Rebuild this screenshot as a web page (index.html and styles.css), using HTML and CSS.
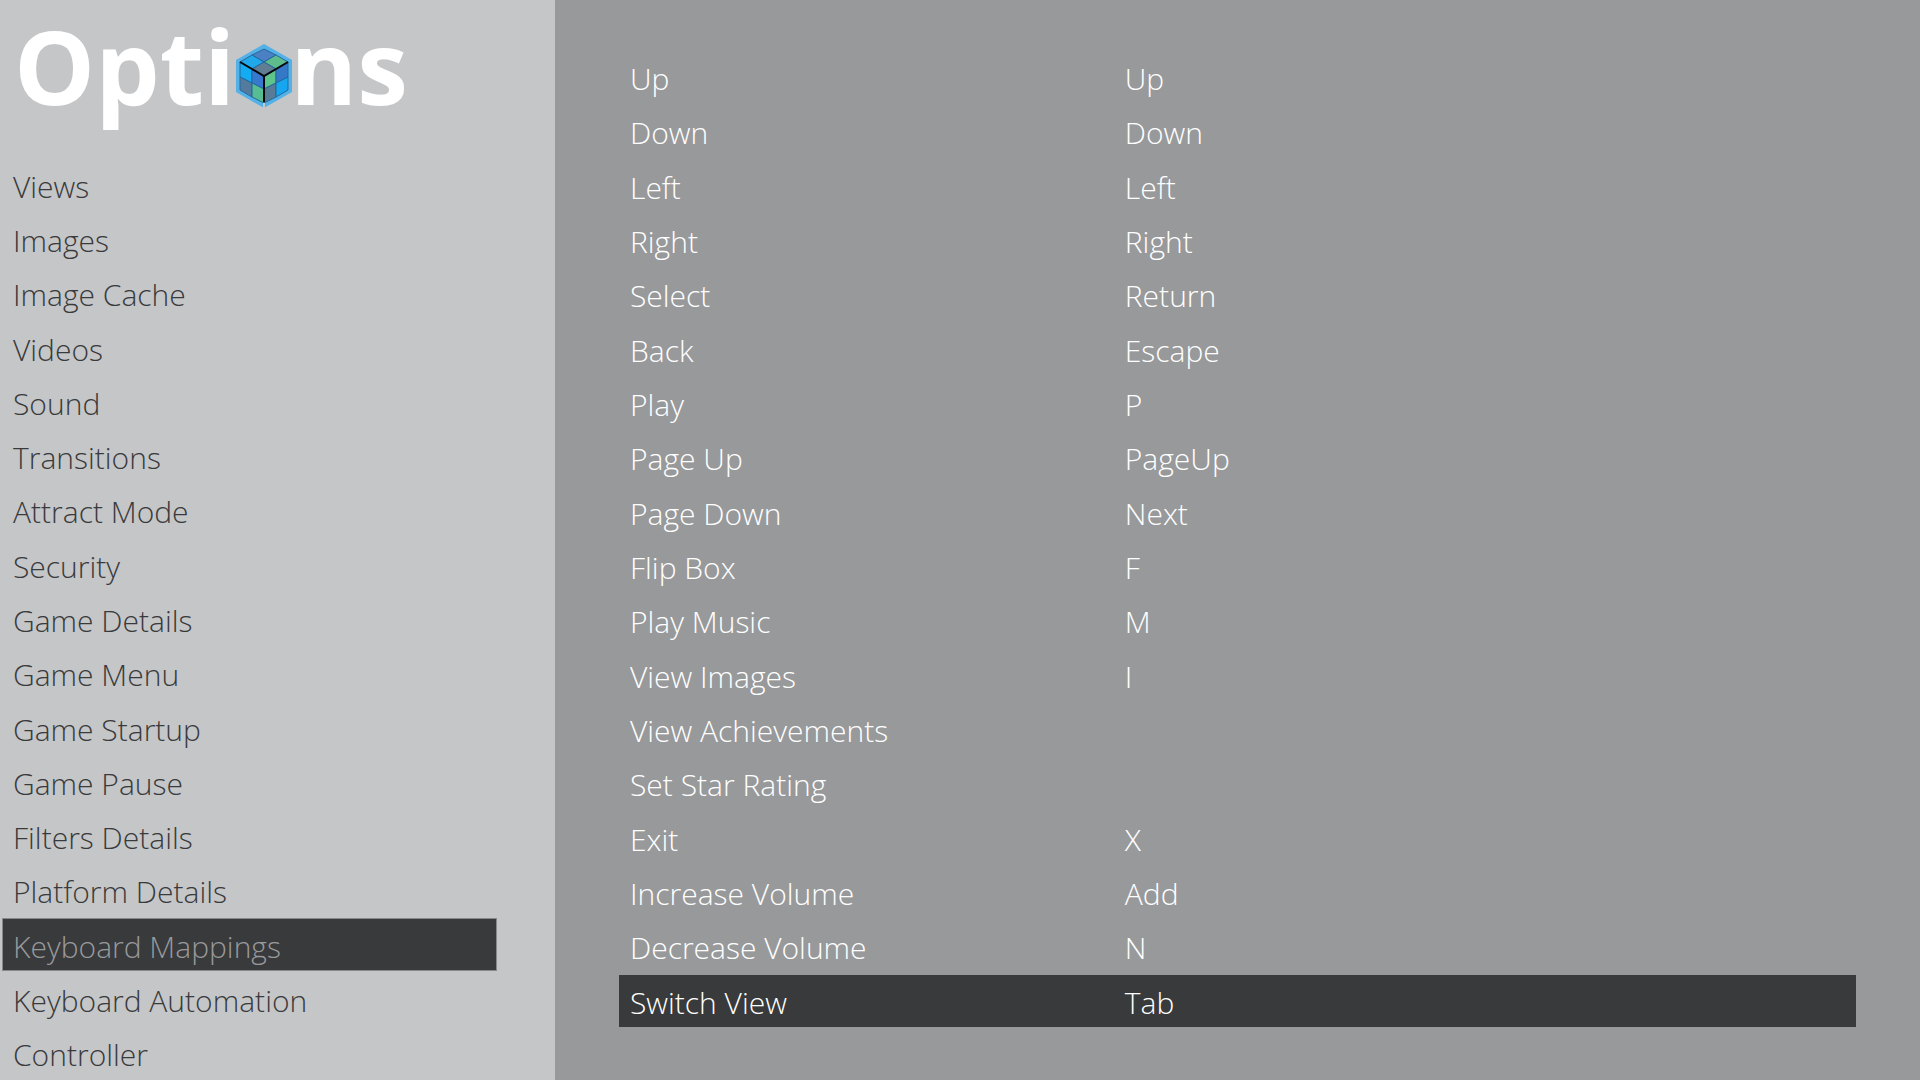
FILE: index.html
```html
<!DOCTYPE html>
<html lang="en">
<head>
    <meta charset="UTF-8">
    <meta name="viewport" content="width=device-width, initial-scale=1.0">
    <title>Options</title>
    <link rel="stylesheet" href="styles.css">
</head>
<body>
    <nav class="sidebar">
        <h1 class="logo" aria-label="Options">
            <span>Opti</span>
            <svg class="cube" viewBox="0 0 56 64" aria-hidden="true">
                <polygon points="28,0 56,16 56,48 28,64 0,48 0,16" fill="#53b1e8"/>
                <g stroke="#23689c" stroke-width="1">
                    <polygon points="28,5 40,11 28,18 16,11" fill="#4c80c4"/>
                    <polygon points="40,11 52,18 40,25 28,18" fill="#5dbb8c"/>
                    <polygon points="16,11 28,18 16,25 4,18" fill="#20a8ea"/>
                    <polygon points="28,18 40,25 28,32 16,25" fill="#617d93"/>
                    <polygon points="4,18 16,25 16,39 4,33" fill="#13acf2"/>
                    <polygon points="16,25 28,32 28,45 16,39" fill="#3779cf"/>
                    <polygon points="4,33 16,39 16,53 4,46" fill="#547b9d"/>
                    <polygon points="16,39 28,45 28,59 16,53" fill="#55bd91"/>
                    <polygon points="28,32 40,25 40,39 28,45" fill="#5dc58b"/>
                    <polygon points="40,25 52,18 52,33 40,39" fill="#3578c8"/>
                    <polygon points="28,45 40,39 40,53 28,59" fill="#587b96"/>
                    <polygon points="40,39 52,33 52,46 40,53" fill="#16a6f0"/>
                </g>
                <path d="M4 18 L28 32 L52 18 M28 32 V58" fill="none" stroke="#05080c" stroke-width="2"/>
                <path d="M28 59 V64" stroke="#c5c6c8" stroke-width="2"/>
            </svg>
            <span>ns</span>
        </h1>
        <ul class="menu">
            <li><a href="#">Views</a></li>
            <li><a href="#">Images</a></li>
            <li><a href="#">Image Cache</a></li>
            <li><a href="#">Videos</a></li>
            <li><a href="#">Sound</a></li>
            <li><a href="#">Transitions</a></li>
            <li><a href="#">Attract Mode</a></li>
            <li><a href="#">Security</a></li>
            <li><a href="#">Game Details</a></li>
            <li><a href="#">Game Menu</a></li>
            <li><a href="#">Game Startup</a></li>
            <li><a href="#">Game Pause</a></li>
            <li><a href="#">Filters Details</a></li>
            <li><a href="#">Platform Details</a></li>
            <li><a href="#" class="active" aria-current="page">Keyboard Mappings</a></li>
            <li><a href="#">Keyboard Automation</a></li>
            <li><a href="#">Controller</a></li>
        </ul>
    </nav>
    <main class="content">
        <table class="mappings">
            <tr><th scope="row">Up</th><td>Up</td></tr>
            <tr><th scope="row">Down</th><td>Down</td></tr>
            <tr><th scope="row">Left</th><td>Left</td></tr>
            <tr><th scope="row">Right</th><td>Right</td></tr>
            <tr><th scope="row">Select</th><td>Return</td></tr>
            <tr><th scope="row">Back</th><td>Escape</td></tr>
            <tr><th scope="row">Play</th><td>P</td></tr>
            <tr><th scope="row">Page Up</th><td>PageUp</td></tr>
            <tr><th scope="row">Page Down</th><td>Next</td></tr>
            <tr><th scope="row">Flip Box</th><td>F</td></tr>
            <tr><th scope="row">Play Music</th><td>M</td></tr>
            <tr><th scope="row">View Images</th><td>I</td></tr>
            <tr><th scope="row">View Achievements</th><td></td></tr>
            <tr><th scope="row">Set Star Rating</th><td></td></tr>
            <tr><th scope="row">Exit</th><td>X</td></tr>
            <tr><th scope="row">Increase Volume</th><td>Add</td></tr>
            <tr><th scope="row">Decrease Volume</th><td>N</td></tr>
            <tr class="selected"><th scope="row">Switch View</th><td>Tab</td></tr>
        </table>
    </main>
</body>
</html>
```
FILE: styles.css
```css
* {
    box-sizing: border-box;
}
body {
    margin: 0;
    min-height: 100vh;
    display: grid;
    grid-template-columns: 555px 1fr;
    background-color: #98999b;
    font-family: "Open Sans", "Noto Sans", sans-serif;
    font-size: 30px;
    font-weight: 350;
    line-height: 42px;
}
.sidebar {
    display: flex;
    flex-direction: column;
    background-color: #c5c6c8;
}
.logo {
    display: flex;
    align-items: flex-start;
    height: 157px;
    margin: 0;
    padding-left: 14px;
    color: white;
    font-size: 102px;
    font-weight: 700;
    line-height: 132px;
}
.cube {
    width: 56px;
    height: 64px;
    margin: 44px -2px 0 1px;
}
.menu {
    flex: 1;
    display: grid;
    grid-auto-rows: 1fr;
    margin: 0;
    padding: 0 58px 0 2px;
    list-style: none;
}
.menu li {
    display: grid;
    padding-top: 1px;
}
.menu a {
    display: flex;
    align-items: center;
    padding: 4px 10px 0;
    border: 1px solid transparent;
    color: #393a3b;
    text-decoration: none;
}
.menu a.active {
    background-color: #393a3b;
    border-color: #87888a;
    color: #98999b;
}
.content {
    display: grid;
    padding: 49px 64px 51px;
}
.mappings {
    width: 100%;
    height: 100%;
    table-layout: fixed;
    border-spacing: 0 2px;
    color: white;
}
.mappings th,
.mappings td {
    padding: 4px 11px 0;
    font-weight: 350;
    text-align: left;
}
.mappings th {
    width: 40%;
}
.mappings .selected {
    background-color: #393a3b;
}
```
